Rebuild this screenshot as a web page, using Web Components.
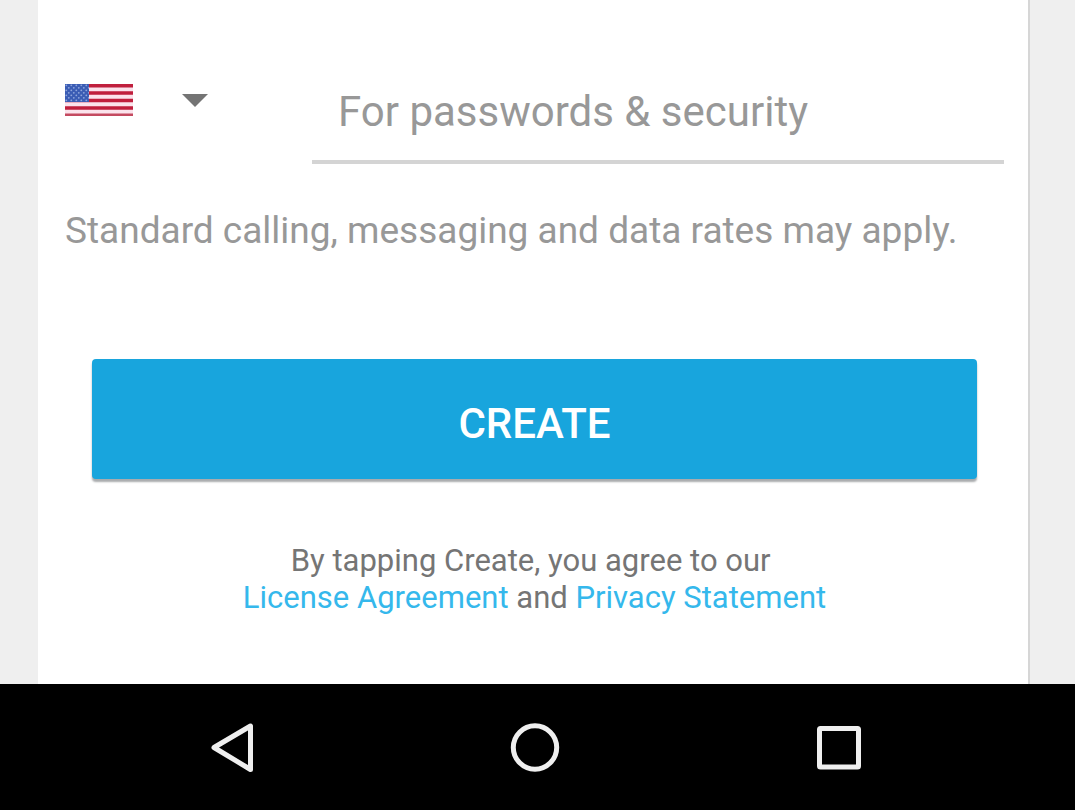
<!DOCTYPE html>
<html lang="en">
<head>
<meta charset="utf-8">
<meta name="viewport" content="width=device-width, initial-scale=1">
<title>Create account</title>
<style>
  body { margin: 0; background: #efefef; font-family: Roboto, "Liberation Sans", sans-serif; }
</style>
</head>
<body>
<app-screen>
  <form-card>
    <phone-row>
      <country-picker></country-picker>
      <phone-field placeholder="For passwords &amp; security"></phone-field>
    </phone-row>
    <rate-note>Standard calling, messaging and data rates may apply.</rate-note>
    <raised-button>CREATE</raised-button>
    <legal-note></legal-note>
  </form-card>
  <system-bar slot="bar"></system-bar>
</app-screen>

<script>
  const define = (name, html, setup) => {
    const template = document.createElement('template');
    template.innerHTML = html;
    customElements.define(name, class extends HTMLElement {
      constructor() {
        super();
        this.attachShadow({ mode: 'open' }).append(template.content.cloneNode(true));
      }
      connectedCallback() { if (setup) setup(this); }
    });
  };

  define('app-screen', `
    <style>
      :host { display: flex; flex-direction: column; min-height: 100vh; }
      main { flex: 1; display: flex; padding: 0 45px 0 38px; }
    </style>
    <main><slot></slot></main>
    <slot name="bar"></slot>`);

  define('form-card', `
    <style>
      :host { display: block; flex: 1; box-sizing: border-box; padding: 74px 24px 68px 27px;
              background: #fff; border-right: 2px solid #d6d6d6; }
    </style>
    <slot></slot>`);

  define('phone-row', `
    <style>:host { display: flex; align-items: flex-start; gap: 104px; }</style>
    <slot></slot>`);

  define('country-picker', `
    <style>
      :host { display: block; flex: none; }
      label { display: grid; grid-template-columns: 68px 1fr; align-items: center; width: 143px; height: 52px; }
      svg { display: block; }
      svg, select { grid-row: 1; }
      .flag { grid-column: 1; }
      .arrow { grid-column: 2; justify-self: end; }
      select { grid-column: 1 / 3; width: 100%; height: 100%; margin: 0; border: 0; appearance: none;
               background: transparent; cursor: pointer; }
    </style>
    <label>
      <svg class="flag" width="68" height="32" viewBox="0 0 68 32" aria-hidden="true">
        <defs>
          <pattern id="stars" width="5" height="5" patternUnits="userSpaceOnUse">
            <circle cx="1.3" cy="1.3" r=".9" fill="#8fa6dc"/>
            <circle cx="3.8" cy="3.8" r=".9" fill="#8fa6dc"/>
          </pattern>
        </defs>
        <rect width="68" height="32" fill="#fbe3ec"/>
        <path d="M0 1.7H68M0 9H68M0 16.5H68M0 24H68" stroke="#c01f3d" stroke-width="3.6"/>
        <path d="M0 30.7H68" stroke="#c44a60" stroke-width="2.6"/>
        <rect width="24" height="18" fill="#3a5cb4"/>
        <rect width="24" height="18" fill="url(#stars)"/>
      </svg>
      <svg class="arrow" width="26" height="14" viewBox="0 0 26 14" aria-hidden="true">
        <path d="M0 1H26L13 14Z" fill="#747474"/>
      </svg>
      <select aria-label="Country"><option value="US" aria-label="United States"></option></select>
    </label>`);

  define('phone-field', `
    <style>
      :host { display: block; flex: 1; min-width: 0; }
      input { display: block; box-sizing: border-box; width: 100%; height: 90px; margin: 0;
              padding: 0 26px 12px; border: 0; border-bottom: 4px solid #d4d4d4;
              background: transparent; outline: 0; font: 42px/50px Roboto, "Liberation Sans", sans-serif; color: #333; }
      input::placeholder { color: #989898; opacity: 1; }
    </style>
    <input type="tel" aria-label="Phone number">`,
    host => { host.shadowRoot.querySelector('input').placeholder = host.getAttribute('placeholder'); });

  define('rate-note', `
    <style>:host { display: block; margin-top: 44px; font-size: 37px; line-height: 46px; color: #989898; }</style>
    <slot></slot>`);

  define('raised-button', `
    <style>
      :host { display: block; margin: 105px 27px 0; }
      button { display: block; width: 100%; height: 120px; padding: 10px 0 0; border: 0; border-radius: 4px;
               background: #18a5dd; box-shadow: 0 3px 2px #a9abad; color: #fff; cursor: pointer;
               font: 500 42px/50px Roboto, "Liberation Sans", sans-serif; }
    </style>
    <button type="button"><slot></slot></button>`);

  define('legal-note', `
    <style>
      :host { display: block; margin-top: 63px; text-align: center; font-size: 31px; line-height: 37px; color: #757575; }
      p { margin: 0; }
      a { color: #35b8ec; text-decoration: none; }
    </style>
    <p>By tapping Create, you agree to our&nbsp;<br><a href="#license">License Agreement</a> and <a href="#privacy">Privacy Statement</a></p>`);

  define('system-bar', `
    <style>
      :host { display: block; background: #000; }
      nav { display: grid; grid-template-columns: repeat(3, 1fr); align-items: center; justify-items: center;
            height: 126px; padding: 0 84px 0 80px; }
      button { padding: 0; border: 0; background: none; cursor: pointer; }
      svg { display: block; fill: none; stroke: #efefef; stroke-width: 5; stroke-linejoin: round; }
    </style>
    <nav aria-label="System">
      <button type="button" aria-label="Back"><svg width="52" height="52" viewBox="0 0 52 52"><path d="M8 26.5 44.5 5V48.5Z"/></svg></button>
      <button type="button" aria-label="Home"><svg width="52" height="52" viewBox="0 0 52 52"><circle cx="26" cy="26.5" r="21.7"/></svg></button>
      <button type="button" aria-label="Recent apps"><svg width="52" height="52" viewBox="0 0 52 52"><rect x="6.5" y="7.5" width="39" height="38.5" rx="1"/></svg></button>
    </nav>`);
</script>
</body>
</html>
